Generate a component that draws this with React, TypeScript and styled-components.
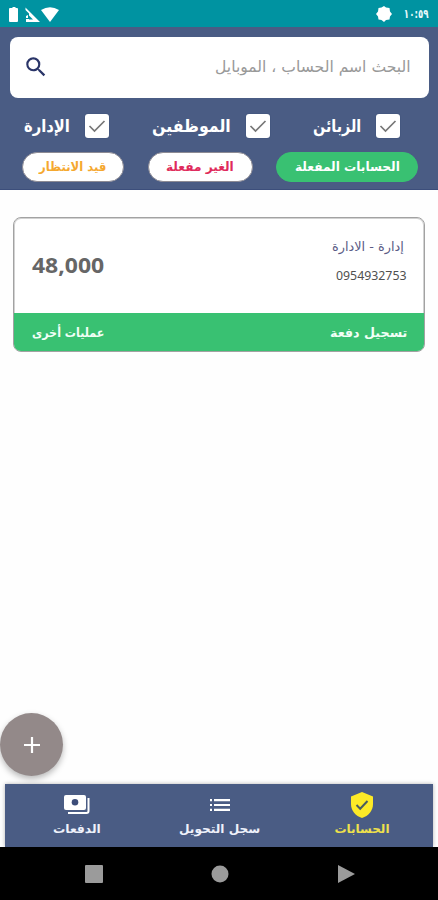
import React, { useLayoutEffect, useRef, useState } from 'react';
import styled, { createGlobalStyle } from 'styled-components';

const Global = createGlobalStyle`
  *, *::before, *::after { box-sizing: border-box; }
  body { margin: 0; background: #fefefe; font-family: "DejaVu Sans", sans-serif; }
  button { border: 0; padding: 0; background: none; font: inherit; }
`;

const Screen = styled.div`
  width: 438px;
  height: 900px;
  display: flex;
  flex-direction: column;
  overflow: hidden;
  background: #fefefe;
`;

const TextBox = styled.span<{ $w: number; $size: number; $color: string; $bold?: boolean; $latin?: boolean }>`
  display: flex;
  flex: none;
  justify-content: flex-start;
  width: ${p => p.$w}px;
  height: 24px;
  line-height: 24px;
  font-size: ${p => p.$size}px;
  font-weight: ${p => (p.$bold ? 700 : 400)};
  font-family: ${p => (p.$latin ? '"Noto Sans", sans-serif' : '"DejaVu Sans", sans-serif')};
  color: ${p => p.$color};
`;

const TextRun = styled.span`
  flex: none;
  white-space: nowrap;
  transform-origin: right center;
`;

type LabelProps = { w: number; size: number; color: string; bold?: boolean; latin?: boolean; children: string };

/* Condenses or widens a line of text so that it fills its box. */
function Label({ w, size, color, bold, latin, children }: LabelProps) {
  const ref = useRef<HTMLSpanElement>(null);
  const [scale, setScale] = useState(1);
  useLayoutEffect(() => {
    if (ref.current) setScale(w / ref.current.offsetWidth);
  }, [w, children]);
  return (
    <TextBox dir="rtl" $w={w} $size={size} $color={color} $bold={bold} $latin={latin}>
      <TextRun ref={ref} style={{ transform: `scaleX(${scale})` }}>{children}</TextRun>
    </TextBox>
  );
}

const StatusBar = styled.div`
  height: 27px;
  flex: none;
  display: flex;
  align-items: center;
  justify-content: space-between;
  padding: 0 9px 0 8px;
  background: #0093a1;
`;
const StatusGroup = styled.div<{ $gap: number }>`
  display: flex;
  align-items: center;
  gap: ${p => p.$gap}px;
`;

const Header = styled.header`
  height: 163px;
  flex: none;
  padding: 10px 9px 0 10px;
  background: #4a5c84;
  border-bottom: 1px solid #3c4e7b;
`;
const Search = styled.div`
  height: 61px;
  display: flex;
  align-items: center;
  justify-content: space-between;
  padding: 0 18px 2px 13px;
  border-radius: 8px;
  background: #fff;
`;
const Filters = styled.div`
  height: 54px;
  display: flex;
  align-items: center;
  justify-content: space-between;
  padding: 2px 29px 0 14px;
`;
const Filter = styled.label<{ $gap: number }>`
  display: flex;
  align-items: center;
  gap: ${p => p.$gap}px;
`;
const CheckBox = styled.span`
  width: 24px;
  height: 24px;
  display: flex;
  align-items: center;
  justify-content: center;
  border-radius: 3px;
  background: #fff;
  box-shadow: 0 0 1px #22365f;
`;
const Pills = styled.div`
  display: flex;
  justify-content: space-between;
  padding: 0 11px 0 12px;
`;
const Pill = styled.button<{ $w: number; $green?: boolean }>`
  width: ${p => p.$w}px;
  height: 30px;
  display: flex;
  align-items: center;
  justify-content: center;
  border-radius: 15px;
  background: ${p => (p.$green ? '#39c172' : '#fff')};
  border: 1px solid ${p => (p.$green ? '#39c172' : '#8d8b94')};
`;

const Content = styled.main`
  flex: 1;
  display: flex;
  flex-direction: column;
  justify-content: space-between;
  padding: 27px 13px 8px 13px;
`;
const Card = styled.article`
  height: 135px;
  display: flex;
  flex-direction: column;
  border: 1px solid #a2a2a2;
  border-radius: 8px;
  overflow: hidden;
  background: #fff;
  box-shadow: inset 0 0 0 1px #d2d2d2;
`;
const CardBody = styled.div`
  flex: 1;
  display: flex;
  align-items: center;
  justify-content: space-between;
  padding: 0 17px 4px 18px;
`;
const Account = styled.div`
  display: flex;
  flex-direction: column;
  align-items: flex-end;
  gap: 5px;
  padding-bottom: 5px;
`;
const AccountName = styled.div`
  padding-right: 3px;
`;
const CardActions = styled.div`
  height: 38px;
  display: flex;
  align-items: center;
  justify-content: space-between;
  padding: 2px 17px 0 18px;
  background: #39c172;
`;
const AddButton = styled.button`
  width: 63px;
  height: 63px;
  margin-left: -13px;
  display: flex;
  align-items: center;
  justify-content: center;
  border-radius: 50%;
  background: #938989;
  box-shadow: 0 3px 6px rgba(0, 0, 0, 0.28);
`;

const Tabs = styled.nav`
  height: 63px;
  flex: none;
  display: grid;
  grid-template-columns: 143px 143px 142px;
  margin: 0 5px;
  background: #4a5c84;
  box-shadow: 0 0 4px rgba(0, 0, 0, 0.3);
`;
const Tab = styled.button`
  display: flex;
  flex-direction: column;
  align-items: center;
  padding-top: 8px;
`;
const TabIcon = styled.span`
  height: 25px;
  display: flex;
  align-items: center;
`;
const SystemNav = styled.div`
  position: relative;
  height: 53px;
  flex: none;
  display: grid;
  grid-template-columns: 18px 18px 18px;
  gap: 108px;
  align-items: center;
  padding-left: 85px;
  background: #000;
`;

const Check = () => (
  <svg width="18" height="14" viewBox="0 0 18 14" fill="none" stroke="#777" strokeWidth="1.7">
    <path d="M1.5 7 6.5 12 16.5 2" />
  </svg>
);

export default function App() {
  return (
    <>
      <Global />
      <Screen>
        <StatusBar>
          <StatusGroup $gap={2}>
            <svg width="52" height="18" viewBox="8 4 52 18" fill="#fff">
              <path d="M11 7h1.500V6h3v1H17q1 0 1 1v12q0 1-1 1h-7q-1 0-1-1V8q0-1 1-1Z" />
              <path d="M25.500 6.500 40 21H26V18H29V12.500L25.500 9ZM28 14v3h-2v-2Z" />
              <path d="M29 14.500 33 18.500H29Z" fill="#0093a1" />
              <path d="M41 9q9-5.500 18 0l-9 12Z" />
            </svg>
          </StatusGroup>
          <StatusGroup $gap={12}>
            <svg width="16" height="16" viewBox="0 0 16 16" fill="#fff">
              <path d="M8 0 10 1.500 13.500 2 14 5.500 16 8 14 10.500 13.500 13.500 10 14 8 16 5.500 14 2.500 13.500 2 10.500 0 8 2 5.500 2.500 2 5.500 1.500Z" />
            </svg>
            <Label w={25} size={12.5} color="#e7f8fa" bold>١٠:٥٩</Label>
          </StatusGroup>
        </StatusBar>
        <Header>
          <Search>
            <svg width="26" height="26" viewBox="0 0 24 24" fill="#2a3568">
              <path d="M15.500 14h-.79l-.28-.27A6.470 6.470 0 0 0 16 9.500 6.500 6.500 0 1 0 9.500 16c1.610 0 3.090-.59 4.230-1.570l.27.28v.79l5 4.990L20.490 19l-4.990-5zm-6 0C7.010 14 5 11.990 5 9.500S7.010 5 9.500 5 14 7.010 14 9.500 11.990 14 9.500 14z" />
            </svg>
            <Label w={196} size={15.5} color="#999">البحث اسم الحساب ، الموبايل</Label>
          </Search>
          <Filters>
            <Filter $gap={15}><Label w={46} size={17} color="#fff" bold>الإدارة</Label><CheckBox><Check /></CheckBox></Filter>
            <Filter $gap={15}><Label w={79} size={17} color="#fff" bold>الموظفين</Label><CheckBox><Check /></CheckBox></Filter>
            <Filter $gap={15}><Label w={48} size={17} color="#fff" bold>الزبائن</Label><CheckBox><Check /></CheckBox></Filter>
          </Filters>
          <Pills>
            <Pill $w={102}><Label w={67} size={12.5} color="#f5a82f" bold>قيد الانتظار</Label></Pill>
            <Pill $w={105}><Label w={68} size={12.5} color="#df2b5c" bold>الغير مفعلة</Label></Pill>
            <Pill $w={142} $green><Label w={105} size={12.5} color="#fff" bold>الحسابات المفعلة</Label></Pill>
          </Pills>
        </Header>
        <Content>
          <Card>
            <CardBody>
              <Label w={72} size={22} color="#666" bold latin>48,000</Label>
              <Account>
                <AccountName><Label w={72} size={12.5} color="#5b5c86">إدارة - الادارة</Label></AccountName>
                <Label w={71} size={12.5} color="#505050" latin>0954932753</Label>
              </Account>
            </CardBody>
            <CardActions>
              <Label w={72} size={12.5} color="#f2fff7" bold>عمليات أخرى</Label>
              <Label w={77} size={12.5} color="#f2fff7" bold>تسجيل دفعة</Label>
            </CardActions>
          </Card>
          <AddButton aria-label="إضافة">
            <svg width="16" height="16" viewBox="0 0 16 16" stroke="#fff" strokeWidth="2.2"><path d="M8 0v16M0 8h16" /></svg>
          </AddButton>
        </Content>
        <Tabs>
          <Tab>
            <TabIcon>
              <svg width="26" height="20" viewBox="0 0 26 20">
                <path d="M2 0h18q2 0 2 2v11q0 2-2 2H2q-2 0-2-2V2Q0 0 2 0Z" fill="#fff" />
                <circle cx="11" cy="7.300" r="3.300" fill="#3c4d79" />
                <path d="M24.500 3v13q0 2-2 2H4" fill="none" stroke="#fff" strokeWidth="2" />
              </svg>
            </TabIcon>
            <Label w={48} size={12} color="#eef1fb" bold>الدفعات</Label>
          </Tab>
          <Tab>
            <TabIcon>
              <svg width="20" height="12" viewBox="0 0 20 12" stroke="#fff" strokeWidth="2.200">
                <path d="M0 1.200h2M4 1.200h16M0 6h2M4 6h16M0 10.800h2M4 10.800h16" />
              </svg>
            </TabIcon>
            <Label w={81} size={12} color="#eef1fb" bold>سجل التحويل</Label>
          </Tab>
          <Tab>
            <TabIcon>
              <svg width="22" height="26" viewBox="0 0 22 26">
                <path d="M11 0 22 4.500V12c0 6.500-4.500 12-11 14C4.500 24 0 18.500 0 12V4.500Z" fill="#fdea27" />
                <path d="m5.500 13 3.700 3.700 7.300-7.700" fill="none" stroke="#4a5c60" strokeWidth="2" />
              </svg>
            </TabIcon>
            <Label w={55} size={12} color="#eee04c" bold>الحسابات</Label>
          </Tab>
        </Tabs>
        <SystemNav>
          <svg width="18" height="18" viewBox="0 0 18 18" fill="#9b9b9b"><rect width="18" height="18" rx="1" /></svg>
          <svg width="18" height="18" viewBox="0 0 18 18" fill="#9b9b9b"><circle cx="9" cy="9" r="8.500" /></svg>
          <svg width="18" height="18" viewBox="0 0 18 18" fill="#9b9b9b"><path d="M1 0 18 9 1 18Z" /></svg>
        </SystemNav>
      </Screen>
    </>
  );
}
